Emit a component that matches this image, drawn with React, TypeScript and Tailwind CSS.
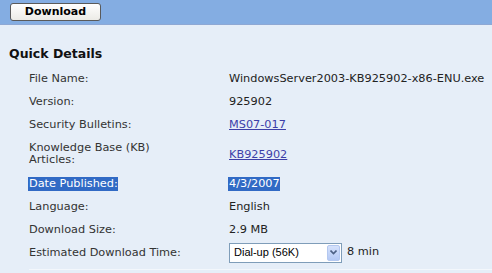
import React from "react";

const font = { fontFamily: '"DejaVu Sans", Verdana, sans-serif' };

function Row({ label, children, tall = false }: { label: React.ReactNode; children: React.ReactNode; tall?: boolean }) {
  return (
    <div className={`grid grid-cols-[200px_1fr] items-center ${tall ? "h-[36px]" : "h-[23px]"}`}>
      <div className="text-[#333] leading-[12px]">{label}</div>
      <div className="text-[#222] leading-[13px]">{children}</div>
    </div>
  );
}

export default function App() {
  return (
    <div className="w-[492px] h-[273px] overflow-hidden bg-[#E6EEF8] text-[11.3px]" style={font}>
      <div className="h-[25px] bg-[#84ADE2] border-b border-[#8EA8D4] flex items-start pl-[10px] pt-[3px]">
        <button className="w-[91px] h-[18px] rounded-[3px] border border-[#5a5a5a] bg-gradient-to-b from-white to-[#ECEBE6] text-[11px] font-bold text-black leading-[16px] text-center">
          Download
        </button>
      </div>
      <div className="pl-[9px] pt-[21px]">
        <div className="text-[12.5px] font-bold text-[#111] leading-[16px]">Quick Details</div>
      </div>
      <div className="pl-[29px] pt-[5px]">
        <Row label="File Name:">WindowsServer2003-KB925902-x86-ENU.exe</Row>
        <Row label="Version:">925902</Row>
        <Row label="Security Bulletins:">
          <span className="text-[#3D3FA8] underline">MS07-017</span>
        </Row>
        <Row tall label={<>Knowledge Base (KB)<br />Articles:</>}>
          <span className="text-[#3D3FA8] underline">KB925902</span>
        </Row>
        <Row label={<span className="bg-[#316AC5] text-white inline-block leading-[14px] pl-[1px] -ml-[1px]">Date Published:</span>}>
          <span className="bg-[#316AC5] text-white inline-block leading-[14px] pl-[1px] -ml-[1px]">4/3/2007</span>
        </Row>
        <Row label="Language:">English</Row>
        <Row label="Download Size:">2.9 MB</Row>
        <div className="grid grid-cols-[200px_1fr] items-center h-[23px]">
          <div className="text-[#333] leading-[12px]">Estimated Download Time:</div>
          <div className="flex items-center gap-[5px]">
            <div className="w-[113px] h-[20px] border border-[#7F9DB9] bg-white flex items-center justify-between pl-[4px] pr-[1px]">
              <span className="text-[11px] text-black" style={{ fontFamily: '"Liberation Sans", Arial, sans-serif' }}>Dial-up (56K)</span>
              <div className="w-[13px] h-[16px] rounded-[2px] border border-[#B4C8F0] bg-gradient-to-b from-[#D6E2FC] to-[#B4C9F5] flex items-center justify-center">
                <svg width="7" height="5" viewBox="0 0 7 5">
                  <path d="M0.5 0.5 L3.5 3.5 L6.5 0.5" fill="none" stroke="#4D6185" strokeWidth="1.6" />
                </svg>
              </div>
            </div>
            <span className="text-[#222]">8 min</span>
          </div>
        </div>
        <div className="mt-[5px] border-t border-[#F3F7FC]"></div>
      </div>
    </div>
  );
}
